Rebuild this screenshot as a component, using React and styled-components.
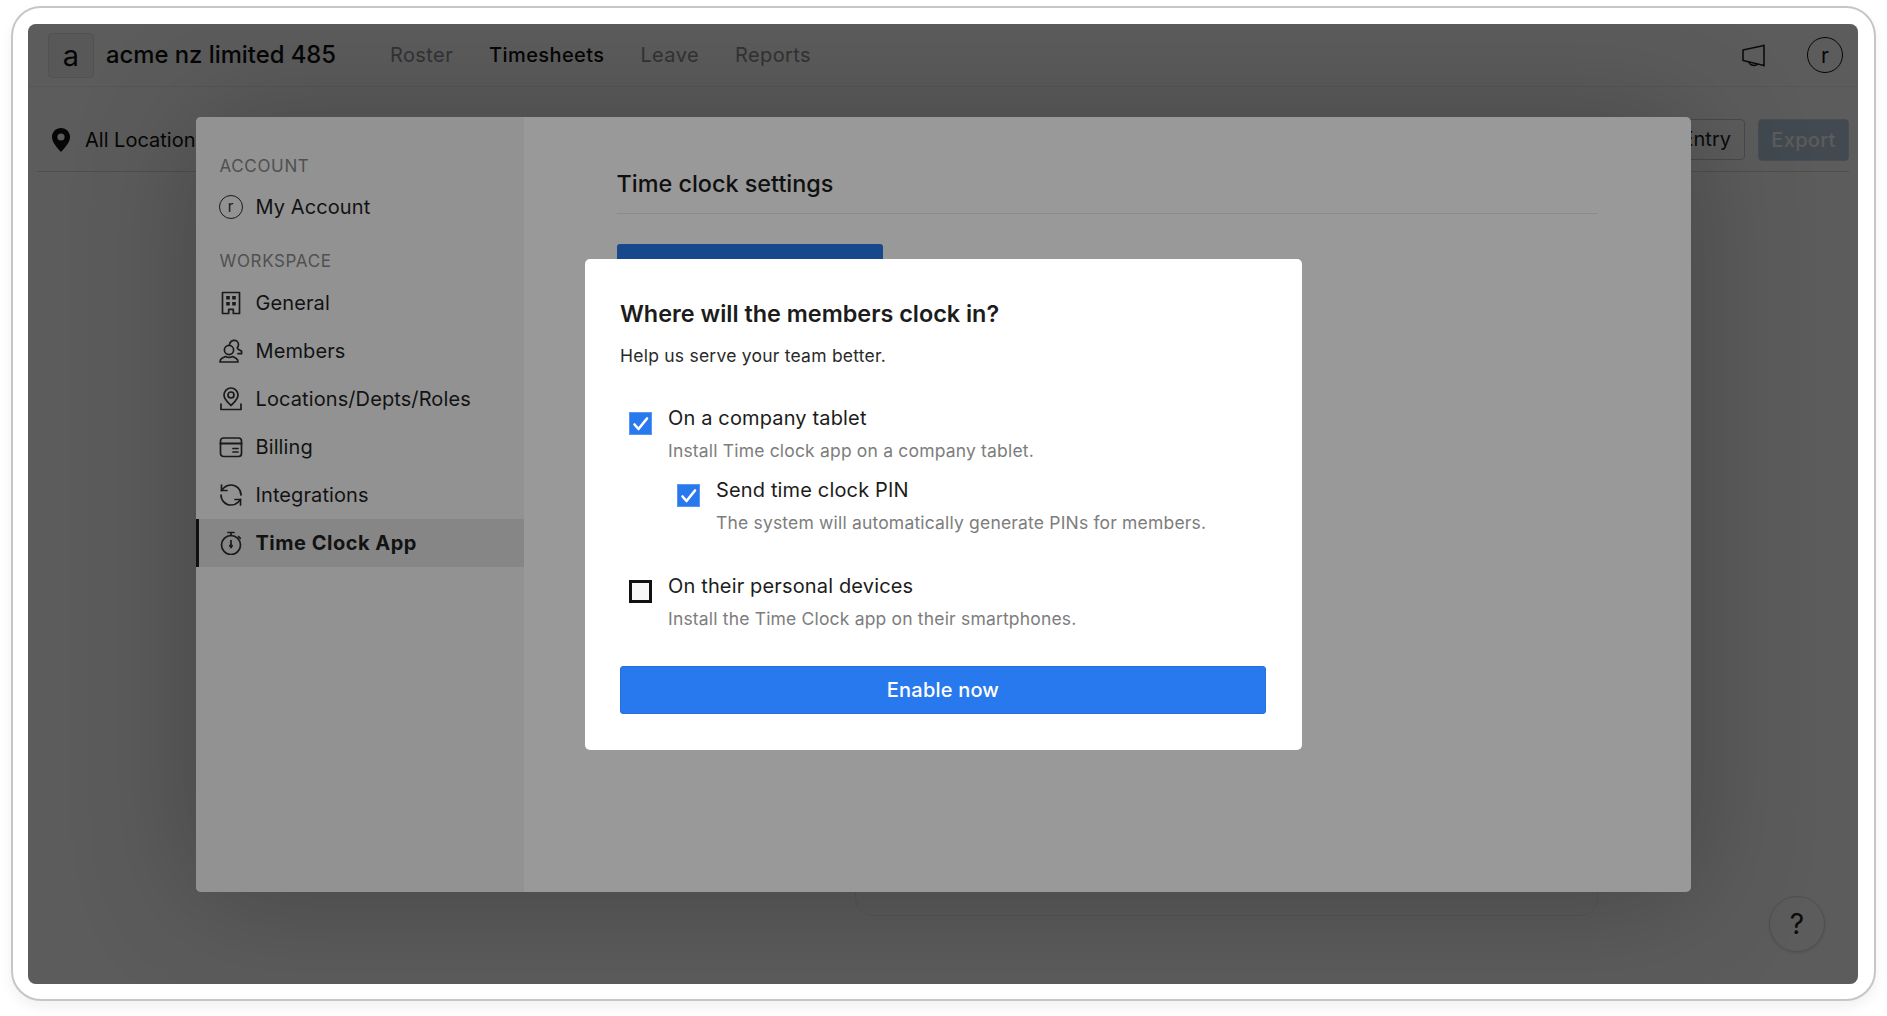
import React from "react";
import styled, { createGlobalStyle } from "styled-components";

const Global = createGlobalStyle`
  html, body { margin: 0; padding: 0; background: #fff; }
  body { font-family: Inter, "Noto Sans", "Liberation Sans", sans-serif; color: #222; }
  * { box-sizing: border-box; }
`;

const Page = styled.div`
  width: 1887px;
  height: 1016px;
  padding: 6px 11px 15px 11px;
  overflow: hidden;
`;
const Frame = styled.div`
  width: 100%;
  height: 100%;
  border: 2px solid #c6c6c6;
  border-radius: 30px;
  padding: 16px 16px 15px 15px;
  background: #fff;
  box-shadow: 0 6px 14px rgba(0, 0, 0, 0.06);
`;
const Shell = styled.div`
  position: relative;
  width: 100%;
  height: 100%;
  border-radius: 8px;
  overflow: hidden;
  background: #fff;
  display: flex;
  flex-direction: column;
`;
const TopBar = styled.header`
  height: 63px;
  flex: none;
  display: flex;
  align-items: center;
  padding: 0 15px 0 20px;
  border-bottom: 1px solid #eee;
`;
const Logo = styled.div`
  width: 46px;
  height: 45px;
  flex: none;
  display: flex;
  align-items: center;
  justify-content: center;
  border: 1px solid #e2e2e2;
  border-radius: 4px;
  background: #f6f6f6;
  font-size: 29px;
  color: #111;
`;
const Brand = styled.div`
  margin: 0 0 2px 12px;
  font-size: 23.8px;
  font-weight: 500;
  color: #111;
`;
const Nav = styled.nav`
  display: flex;
  gap: 36px;
  margin-left: 54px;
`;
const NavLink = styled.a`
  font-size: 20px;
  letter-spacing: 0.4px;
  color: ${(p) => (p.$active ? "#111" : "#8e8e8e")};
  font-weight: ${(p) => (p.$active ? 500 : 400)};
`;
const TopActions = styled.div`
  margin-left: auto;
  display: flex;
  align-items: center;
  gap: 42px;
`;
const Avatar = styled.div`
  width: 36px;
  height: 36px;
  border: 1.5px solid #111;
  border-radius: 50%;
  display: flex;
  align-items: center;
  justify-content: center;
  font-size: 21px;
  color: #111;
`;
const SubBar = styled.div`
  height: 85px;
  flex: none;
  margin: 0 9px;
  display: flex;
  align-items: center;
  gap: 15px;
  padding: 21px 0 0 15px;
  border-bottom: 1px solid #ddd;
`;
const SubLabel = styled.span`
  font-size: 20px;
  color: #111;
`;
const SubActions = styled.div`
  margin-left: auto;
  display: flex;
  gap: 13px;
`;
const GhostButton = styled.button`
  height: 41px;
  width: 120px;
  padding: 0 13px;
  text-align: right;
  font: 400 20px Inter, sans-serif;
  color: #222;
  background: #fff;
  border: 1px solid #ccc;
  border-radius: 4px;
`;
const ExportButton = styled.button`
  height: 42px;
  width: 91px;
  font: 500 20px Inter, sans-serif;
  letter-spacing: 0.3px;
  color: #fff;
  background: #b8cce0;
  border: 1px solid #c4d6e8;
  border-radius: 4px;
`;
const Content = styled.main`
  flex: 1;
  display: flex;
  justify-content: flex-end;
  align-items: flex-end;
  padding: 0 260px 68px 0;
`;
const Card = styled.div`
  width: 743px;
  height: 300px;
  border: 1px solid #eee;
  border-radius: 18px;
`;
const HelpButton = styled.div`
  position: absolute;
  right: 33px;
  bottom: 32px;
  width: 56px;
  height: 56px;
  border-radius: 50%;
  border: 1px solid #dcdcdc;
  box-shadow: 0 1px 3px rgba(0, 0, 0, 0.12);
  display: flex;
  align-items: center;
  justify-content: center;
  font-size: 28px;
  color: #222;
  background: #fff;
`;
const Backdrop = styled.div`
  position: absolute;
  inset: 0;
  background: rgba(0, 0, 0, 0.4);
  display: flex;
  align-items: center;
  justify-content: center;
`;
const SettingsModal = styled.section`
  width: 1495px;
  height: 775px;
  display: flex;
  background: #fff;
  border-radius: 5px;
  overflow: hidden;
  box-shadow: 0 4px 120px rgba(0, 0, 0, 0.25);
`;
const Sidebar = styled.aside`
  width: 328px;
  flex: none;
  background: #f4f4f4;
  padding-top: 39px;
`;
const SideHeading = styled.div`
  font-size: 17px;
  letter-spacing: 0.65px;
  line-height: 20px;
  padding-left: 24px;
  color: #868686;
  margin-bottom: ${(p) => (p.$first ? "7px" : "8px")};
  margin-top: ${(p) => (p.$first ? "0" : "20px")};
`;
const SideItem = styled.a`
  height: 48px;
  display: flex;
  align-items: center;
  gap: 12px;
  padding-left: ${(p) => (p.$active ? "20px" : "23px")};
  border-left: ${(p) => (p.$active ? "3px solid #1c1c1c" : "0")};
  background: ${(p) => (p.$active ? "#dfdfdf" : "transparent")};
  font-size: 20px;
  letter-spacing: ${(p) => (p.$active ? "0.5px" : "0.1px")};
  font-weight: ${(p) => (p.$active ? 700 : 400)};
  color: #1f1f1f;
`;
const IconSlot = styled.span`
  width: 24px;
  height: 24px;
  margin-right: 1px;
  flex: none;
  display: flex;
  align-items: center;
  justify-content: center;
  color: #2c2c2c;
`;
const InitialCircle = styled.span`
  width: 24px;
  height: 24px;
  border: 1.5px solid #2c2c2c;
  border-radius: 50%;
  display: flex;
  align-items: center;
  justify-content: center;
  font-size: 15px;
  color: #2c2c2c;
`;
const SettingsMain = styled.div`
  flex: 1;
  padding: 48px 93px 0;
`;
const SettingsTitle = styled.h2`
  margin: 0;
  height: 49px;
  font-size: 23.4px;
  line-height: 38px;
  font-weight: 500;
  color: #1c1c1c;
  border-bottom: 1px solid #e8e8e8;
`;
const SetupButton = styled.div`
  margin-top: 30px;
  width: 266px;
  height: 48px;
  border-radius: 3px;
  background: #2779e9;
`;
const Dialog = styled.section`
  width: 717px;
  height: 491px;
  padding: 36px 35.5px;
  background: #fff;
  border-radius: 5px;
`;
const DialogTitle = styled.h3`
  margin: 0;
  font-size: 23.4px;
  line-height: 38px;
  font-weight: 600;
  color: #1c1c1c;
`;
const DialogHelp = styled.p`
  margin: 10px 0 0;
  font-size: 17.5px;
  line-height: 26px;
  letter-spacing: 0.23px;
  color: #2a2a2a;
`;
const Options = styled.div`
  margin-top: 35px;
  display: flex;
  flex-direction: column;
`;
const Option = styled.label`
  display: flex;
  gap: 16px;
  padding-left: ${(p) => (p.$nested ? "57px" : "9px")};
  margin-top: ${(p) => p.$gap || 0}px;
`;
const Box = styled.span`
  width: 23px;
  height: 23px;
  flex: none;
  margin-top: 8px;
  display: flex;
  align-items: center;
  justify-content: center;
  background: ${(p) => (p.$on ? "#2979ee" : "#f7f7f7")};
  border: ${(p) => (p.$on ? "1px solid #5a97f2" : "3px solid #111")};
`;
const OptionText = styled.span`
  display: flex;
  flex-direction: column;
`;
const OptionLabel = styled.span`
  font-size: 20px;
  line-height: 28px;
  letter-spacing: 0.15px;
  color: #1c1c1c;
`;
const OptionDesc = styled.span`
  margin-top: 6px;
  font-size: 17.5px;
  line-height: 26px;
  letter-spacing: 0.18px;
  color: #7d7d7d;
`;
const PrimaryButton = styled.button`
  width: 100%;
  height: 48px;
  margin-top: 34px;
  background: #2979ee;
  border: 1px solid #2670dc;
  border-radius: 3px;
  color: #fff;
  font: 500 20px Inter, sans-serif;
  letter-spacing: 0.2px;
`;

const Svg = ({ children }) => (
  <svg width="24" height="24" viewBox="0 0 24 24" fill="none" stroke="currentColor" strokeWidth="1.7" strokeLinecap="round" strokeLinejoin="round">
    {children}
  </svg>
);
const Pin = () => (
  <svg width="18" height="24" viewBox="0 0 18 24">
    <path fillRule="evenodd" fill="#111" d="M9 0C4 0 0 3.9 0 8.9 0 15 6.4 20.6 9 24c2.6-3.4 9-9 9-15.1C18 3.9 14 0 9 0Zm0 5.4a3.6 3.6 0 1 1 0 7.2 3.6 3.6 0 0 1 0-7.2Z" />
  </svg>
);
const Megaphone = () => (
  <svg width="23" height="23" viewBox="0 0 23 23" fill="none" stroke="#222" strokeWidth="1.6" strokeLinejoin="round">
    <path d="M22 .5v22M22 1.5 1 6v10.5l21 5" />
    <path d="M7 18c.5 3.5 6.5 4.5 9 2" />
  </svg>
);
const IconGeneral = () => (
  <Svg>
    <path d="M3.5 1.5h17v21h-6.2v-4.2h-4.600v4.200H3.500z" />
    <path fill="currentColor" stroke="none" d="M7.200 5h3.600v3.600H7.200zM13.200 5h3.600v3.600h-3.600zM7.200 11h3.600v3.600H7.200zM13.200 11h3.600v3.600h-3.600z" />
  </Svg>
);
const IconMembers = () => (
  <Svg>
    <circle cx="10" cy="11" r="4.600" />
    <path d="M1 23c0-2 .5-3 2-3.800l3.500-1.700c2 1.100 5 1.100 7 0l3.500 1.700c1.500.8 2 1.800 2 3.800z" />
    <path d="M10.500 5.600C11 3 13 1.400 15.200 1.400c2.400 0 4.300 1.900 4.300 4.200 0 1.200-.4 2.400-1.300 3.200.2 1 .9 1.500 2 1.900l2.400 1.600v2.400h-3.600" />
  </Svg>
);
const IconLocation = () => (
  <Svg>
    <path d="M12 18.500c-2.600-3-7-5.800-7-10.500a7 7 0 0 1 14 0c0 4.700-4.400 7.500-7 10.500Z" />
    <circle cx="12" cy="8" r="3" />
    <path d="M2 17v5.500h20V17" />
  </Svg>
);
const IconBilling = () => (
  <Svg>
    <rect x="1.500" y="3" width="21" height="18.500" rx="3" />
    <path d="M1.500 8.500h21" strokeWidth="2.2" />
    <path d="M14 13.500h5M14 17h5" />
  </Svg>
);
const IconSync = () => (
  <Svg>
    <path d="M22 12a10 10 0 0 0-10-10 10.500 10.500 0 0 0-7.300 3L2.500 7.500" />
    <path d="M2.500 2v5.500H8" />
    <path d="M2 12a10 10 0 0 0 10 10 10.500 10.500 0 0 0 7.300-3l2.200-2.500" />
    <path d="M16 16.500h5.500V22" />
  </Svg>
);
const IconClock = () => (
  <Svg>
    <circle cx="12" cy="14" r="9.500" />
    <path d="M9 1.500h6M12 1.500v3M19.500 5.500l1.800 1.800" />
    <path d="M12 9.500v5" />
    <path fill="currentColor" d="M10.800 14.500h2.400L12 16.500z" />
  </Svg>
);
const Check = () => (
  <svg width="17" height="17" viewBox="0 0 17 17" fill="none" stroke="#fff" strokeWidth="2.6" strokeLinecap="round" strokeLinejoin="round">
    <path d="M2.500 9.500 6.500 14 15 3.500" />
  </svg>
);

const items = [
  ["General", IconGeneral],
  ["Members", IconMembers],
  ["Locations/Depts/Roles", IconLocation],
  ["Billing", IconBilling],
  ["Integrations", IconSync],
];

export default function App() {
  return (
    <Page>
      <Global />
      <Frame>
        <Shell>
          <TopBar>
            <Logo>a</Logo>
            <Brand>acme nz limited 485</Brand>
            <Nav>
              <NavLink>Roster</NavLink>
              <NavLink $active>Timesheets</NavLink>
              <NavLink>Leave</NavLink>
              <NavLink>Reports</NavLink>
            </Nav>
            <TopActions>
              <Megaphone />
              <Avatar>r</Avatar>
            </TopActions>
          </TopBar>
          <SubBar>
            <Pin />
            <SubLabel>All Locations</SubLabel>
            <SubActions>
              <GhostButton>Entry</GhostButton>
              <ExportButton>Export</ExportButton>
            </SubActions>
          </SubBar>
          <Content>
            <Card />
          </Content>
          <HelpButton>?</HelpButton>
          <Backdrop>
            <SettingsModal>
              <Sidebar>
                <SideHeading $first>ACCOUNT</SideHeading>
                <SideItem>
                  <IconSlot><InitialCircle>r</InitialCircle></IconSlot>
                  My Account
                </SideItem>
                <SideHeading>WORKSPACE</SideHeading>
                {items.map(([label, Icon]) => (
                  <SideItem key={label}>
                    <IconSlot><Icon /></IconSlot>
                    {label}
                  </SideItem>
                ))}
                <SideItem $active>
                  <IconSlot><IconClock /></IconSlot>
                  Time Clock App
                </SideItem>
              </Sidebar>
              <SettingsMain>
                <SettingsTitle>Time clock settings</SettingsTitle>
                <SetupButton />
              </SettingsMain>
            </SettingsModal>
          </Backdrop>
          <Backdrop>
            <Dialog>
              <DialogTitle>Where will the members clock in?</DialogTitle>
              <DialogHelp>Help us serve your team better.</DialogHelp>
              <Options>
                <Option>
                  <Box $on><Check /></Box>
                  <OptionText>
                    <OptionLabel>On a company tablet</OptionLabel>
                    <OptionDesc>Install Time clock app on a company tablet.</OptionDesc>
                  </OptionText>
                </Option>
                <Option $nested $gap={12}>
                  <Box $on><Check /></Box>
                  <OptionText>
                    <OptionLabel>Send time clock PIN</OptionLabel>
                    <OptionDesc>The system will automatically generate PINs for members.</OptionDesc>
                  </OptionText>
                </Option>
                <Option $gap={36}>
                  <Box />
                  <OptionText>
                    <OptionLabel>On their personal devices</OptionLabel>
                    <OptionDesc>Install the Time Clock app on their smartphones.</OptionDesc>
                  </OptionText>
                </Option>
              </Options>
              <PrimaryButton>Enable now</PrimaryButton>
            </Dialog>
          </Backdrop>
        </Shell>
      </Frame>
    </Page>
  );
}
